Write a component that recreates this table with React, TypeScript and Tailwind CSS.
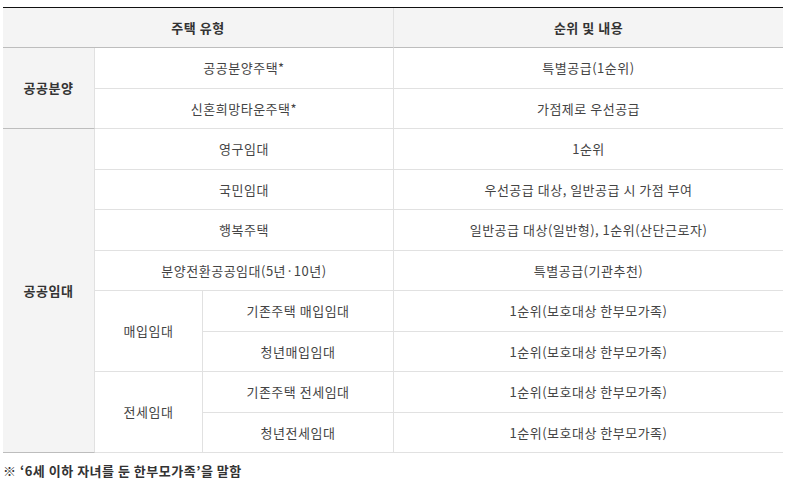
const rows = [
  { sub: '영구임대', desc: '1순위' },
  { sub: '국민임대', desc: '우선공급 대상, 일반공급 시 가점 부여' },
  { sub: '행복주택', desc: '일반공급 대상(일반형), 1순위(산단근로자)' },
  { sub: '분양전환공공임대(5년·10년)', desc: '특별공급(기관추천)' },
];

const groups = [
  {
    label: '매입임대',
    items: [
      { name: '기존주택 매입임대', desc: '1순위(보호대상 한부모가족)' },
      { name: '청년매입임대', desc: '1순위(보호대상 한부모가족)' },
    ],
  },
  {
    label: '전세임대',
    items: [
      { name: '기존주택 전세임대', desc: '1순위(보호대상 한부모가족)' },
      { name: '청년전세임대', desc: '1순위(보호대상 한부모가족)' },
    ],
  },
];

const cell = 'flex items-center justify-center border-b border-[#e1e1e1] text-center';

export default function App() {
  return (
    <div
      className="w-[796px] h-[481px] bg-white px-[3px] pt-[7px] text-[13px] tracking-[0.5px] text-[#444]"
      style={{ fontFamily: '"Noto Sans CJK KR", "Noto Sans", sans-serif' }}
    >
      <div className="grid w-[780px] grid-cols-[92px_108px_191px_389px] grid-rows-[40px_repeat(10,40.5px)] border-t border-[#111]">
        {/* Header */}
        <div className="col-span-3 flex items-center justify-center border-b border-r border-b-[#bdbdbd] border-r-[#e1e1e1] bg-[#f4f4f4] font-bold text-[#333]">
          주택 유형
        </div>
        <div className="flex items-center justify-center border-b border-[#bdbdbd] bg-[#f4f4f4] font-bold text-[#333]">
          순위 및 내용
        </div>

        {/* 공공분양 */}
        <div className="row-span-2 flex items-center justify-center border-b border-r border-b-[#bdbdbd] border-r-[#e1e1e1] bg-[#f4f4f4] font-bold text-[#333]">
          공공분양
        </div>
        <div className={`${cell} col-span-2 border-r`}>공공분양주택*</div>
        <div className={cell}>특별공급(1순위)</div>
        <div className={`${cell} col-span-2 border-r`}>신혼희망타운주택*</div>
        <div className={cell}>가점제로 우선공급</div>

        {/* 공공임대 */}
        <div className="row-span-8 flex items-center justify-center border-b border-r border-b-[#bdbdbd] border-r-[#e1e1e1] bg-[#f4f4f4] font-bold text-[#333]">
          공공임대
        </div>
        {rows.map((r) => (
          <div key={r.sub} className="contents">
            <div className={`${cell} col-span-2 border-r`}>{r.sub}</div>
            <div className={cell}>{r.desc}</div>
          </div>
        ))}
        {groups.map((g) => (
          <div key={g.label} className="contents">
            <div className={`${cell} row-span-2 border-r`}>{g.label}</div>
            {g.items.map((it) => (
              <div key={it.name} className="contents">
                <div className={`${cell} border-r`}>{it.name}</div>
                <div className={cell}>{it.desc}</div>
              </div>
            ))}
          </div>
        ))}
      </div>

      <p className="mt-[8px] font-bold text-[#333]">※ ‘6세 이하 자녀를 둔 한부모가족’을 말함</p>
    </div>
  );
}
